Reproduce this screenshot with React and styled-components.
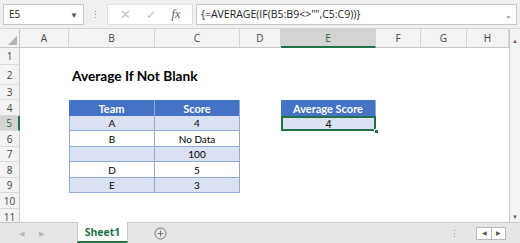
import React from "react";
import styled, { createGlobalStyle } from "styled-components";

const GlobalStyle = createGlobalStyle`
  html, body {
    margin: 0;
    padding: 0;
    background: #ffffff;
    overflow: hidden;
  }
  * {
    box-sizing: border-box;
  }
`;

const green = "#217346";
const headBlue = "#4472c4";
const bandBlue = "#d9e1f2";
const lineBlue = "#8ea9db";

const Window = styled.div`
  width: 520px;
  height: 243px;
  display: flex;
  flex-direction: column;
  background: #fff;
  font-family: Lato, "Open Sans", sans-serif;
  color: #000;
`;

const FormulaBar = styled.div`
  height: 29px;
  display: flex;
  align-items: center;
  padding: 0 3px;
  background: #f0f0f0;
  border-bottom: 1px solid #d6d6d6;
`;

const Box = styled.div`
  height: 21px;
  display: flex;
  align-items: center;
  background: #fff;
  border: 1px solid #c8c8c8;
  font-family: "Open Sans", sans-serif;
  font-size: 10px;
  color: #222;
`;

const NameBox = styled(Box)`
  width: 81px;
  padding: 0 5px;
  justify-content: space-between;
`;

const Caret = styled.span`
  font-size: 8px;
  color: #555;
`;

const Dots = styled.div`
  width: 23px;
  display: flex;
  flex-direction: column;
  align-items: center;
  gap: 2px;
  span {
    width: 1px;
    height: 1px;
    background: #999;
  }
`;

const FxBox = styled(Box)`
  width: 86px;
  justify-content: space-around;
  padding: 0 4px;
  border-color: #e0e0e0;
`;

const FxButton = styled.span`
  color: ${(p) => (p.$muted ? "#c2c2c2" : "#555")};
  font-size: ${(p) => p.$size || 12}px;
  font-family: ${(p) => (p.$serif ? '"Liberation Serif", serif' : "inherit")};
  font-style: ${(p) => (p.$serif ? "italic" : "normal")};
`;

const FormulaInput = styled(Box)`
  flex: 1;
  margin-left: 3px;
  padding: 0 4px;
  justify-content: space-between;
  font-size: 10.5px;
`;

const Main = styled.div`
  display: flex;
  height: 193px;
`;

const Sheet = styled.div`
  width: 509px;
  height: 193px;
  overflow: hidden;
  display: grid;
  grid-template-columns: 20px 49px 86px 85px 41px 95px 45px 46px 42px;
  grid-template-rows: 19px 17px 20px 15px 16px 15px 16px 15px 16px 15px 16px 16px;
`;

const Corner = styled.div`
  background: #f3f3f3;
  border-right: 1px solid #c8c8c8;
  border-bottom: 1px solid #c8c8c8;
  display: flex;
  align-items: flex-end;
  justify-content: flex-end;
  padding: 2px;
`;

const ColHead = styled.div`
  display: flex;
  align-items: center;
  justify-content: center;
  font-family: "Open Sans", sans-serif;
  font-size: 10px;
  color: ${(p) => (p.$active ? "#1e6b41" : "#444")};
  background: ${(p) => (p.$active ? "#d3d3d3" : "#f3f3f3")};
  border-right: 1px solid #d4d4d4;
  border-bottom: ${(p) => (p.$active ? `2px solid ${green}` : "1px solid #c8c8c8")};
`;

const RowHead = styled.div`
  display: flex;
  align-items: center;
  justify-content: center;
  font-family: "Open Sans", sans-serif;
  font-size: 10px;
  color: ${(p) => (p.$active ? "#1e6b41" : "#444")};
  background: ${(p) => (p.$active ? "#d3d3d3" : "#f3f3f3")};
  border-bottom: 1px solid #dadada;
  border-right: ${(p) => (p.$active ? `2px solid ${green}` : "1px solid #c8c8c8")};
`;

const Cell = styled.div`
  position: relative;
  display: flex;
  align-items: center;
  justify-content: center;
  font-size: 10px;
  white-space: nowrap;
  ${(p) =>
    p.$kind === "head" &&
    `
    background: ${headBlue};
    color: #fff;
    font-weight: 700;
    font-size: 11px;
    border-right: 1px solid #8faadc;
  `}
  ${(p) =>
    (p.$kind === "band" || p.$kind === "plain") &&
    `
    background: ${p.$kind === "band" ? bandBlue : "#fff"};
    border-right: 1px solid ${lineBlue};
    border-bottom: 1px solid ${lineBlue};
  `}
  ${(p) => p.$first && `border-left: 1px solid ${lineBlue};`}
  ${(p) => p.$selected && `box-shadow: inset 0 0 0 2px ${green}; border: none; font-size: 10.5px;`}
`;

const Title = styled.div`
  grid-column: 3 / span 3;
  display: flex;
  align-items: center;
  padding-left: 3px;
  font-size: 13.7px;
  font-weight: 700;
  white-space: nowrap;
`;

const Handle = styled.span`
  position: absolute;
  right: -3px;
  bottom: -3px;
  width: 5px;
  height: 5px;
  background: ${green};
  border: 1px solid #fff;
`;

const VScroll = styled.div`
  width: 11px;
  background: #f3f3f3;
  border-left: 1px solid #c8c8c8;
  display: flex;
  flex-direction: column;
  justify-content: space-between;
  align-items: center;
  padding: 8px 0 2px;
  font-size: 6px;
  color: #666;
`;

const TabBar = styled.div`
  height: 21px;
  display: flex;
  align-items: stretch;
  background: #e6e6e6;
  border-top: 1px solid #c8c8c8;
  font-family: "Open Sans", sans-serif;
`;

const NavArrows = styled.div`
  width: 77px;
  display: flex;
  align-items: center;
  gap: 15px;
  padding-left: 19px;
  font-size: 7px;
  color: #b8b8b8;
`;

const Tab = styled.div`
  width: 51px;
  display: flex;
  align-items: center;
  justify-content: center;
  background: #fff;
  color: ${green};
  font-weight: 700;
  font-size: 10.5px;
  border-bottom: 2px solid ${green};
  border-left: 1px solid #c8c8c8;
  border-right: 1px solid #c8c8c8;
  margin-top: -1px;
`;

const AddSheet = styled.div`
  margin-left: 26px;
  display: flex;
  align-items: center;
  color: #777;
`;

const TabRight = styled.div`
  margin-left: auto;
  display: flex;
  align-items: center;
  gap: 10px;
  padding-right: 14px;
`;

const ScrollBtns = styled.div`
  display: flex;
  border: 1px solid #b8b8b8;
  background: #fff;
  span {
    width: 14px;
    height: 11px;
    display: flex;
    align-items: center;
    justify-content: center;
    font-size: 6px;
    color: #555;
  }
  span + span {
    border-left: 1px solid #b8b8b8;
  }
`;

const columns = ["A", "B", "C", "D", "E", "F", "G", "H"];

const table = {
  4: { B: { t: "Team", k: "head" }, C: { t: "Score", k: "head" }, E: { t: "Average Score", k: "head" } },
  5: { B: { t: "A", k: "band" }, C: { t: "4", k: "band" }, E: { t: "4", k: "band", sel: true } },
  6: { B: { t: "B", k: "plain" }, C: { t: "No Data", k: "plain" } },
  7: { B: { t: "", k: "band" }, C: { t: "100", k: "band" } },
  8: { B: { t: "D", k: "plain" }, C: { t: "5", k: "plain" } },
  9: { B: { t: "E", k: "band" }, C: { t: "3", k: "band" } },
};

const CornerMark = () => (
  <svg width="9" height="9" viewBox="0 0 9 9">
    <polygon points="9,0 9,9 0,9" fill="#b4b4b4" />
  </svg>
);

const PlusCircle = () => (
  <svg width="13" height="13" viewBox="0 0 13 13">
    <circle cx="6.5" cy="6.5" r="5.5" fill="none" stroke="#777" strokeWidth="1" />
    <path d="M6.5 3.5v6M3.5 6.5h6" stroke="#777" strokeWidth="1" />
  </svg>
);

const SheetRow = ({ n }) => {
  const row = table[n] || {};
  return (
    <>
      <RowHead $active={n === 5}>{n}</RowHead>
      {n === 2 ? (
        <>
          <Cell />
          <Title>Average If Not Blank</Title>
          {columns.slice(4).map((c) => (
            <Cell key={c} />
          ))}
        </>
      ) : (
        columns.map((c) => {
          const cell = row[c];
          if (!cell) return <Cell key={c} />;
          return (
            <Cell key={c} $kind={cell.k} $first={c !== "C" && cell.k !== "head"} $selected={cell.sel}>
              {cell.t}
              {cell.sel && <Handle />}
            </Cell>
          );
        })
      )}
    </>
  );
};

const App = () => {
  const rows = [1, 2, 3, 4, 5, 6, 7, 8, 9, 10, 11];
  return (
    <Window>
      <GlobalStyle />
      <FormulaBar>
        <NameBox>
          E5
          <Caret>▼</Caret>
        </NameBox>
        <Dots>
          <span />
          <span />
          <span />
        </Dots>
        <FxBox>
          <FxButton $muted $size={13}>✕</FxButton>
          <FxButton $muted $size={12}>✓</FxButton>
          <FxButton $serif $size={12}>fx</FxButton>
        </FxBox>
        <FormulaInput>
          {'{=AVERAGE(IF(B5:B9<>"",C5:C9))}'}
          <Caret>⌄</Caret>
        </FormulaInput>
      </FormulaBar>
      <Main>
        <Sheet>
          <Corner>
            <CornerMark />
          </Corner>
          {columns.map((c) => (
            <ColHead key={c} $active={c === "E"}>
              {c}
            </ColHead>
          ))}
          {rows.map((n) => (
            <SheetRow key={n} n={n} />
          ))}
        </Sheet>
        <VScroll>
          <span>▲</span>
          <span>▼</span>
        </VScroll>
      </Main>
      <TabBar>
        <NavArrows>
          <span>◀</span>
          <span>▶</span>
        </NavArrows>
        <Tab>Sheet1</Tab>
        <AddSheet>
          <PlusCircle />
        </AddSheet>
        <TabRight>
          <Dots>
            <span />
            <span />
            <span />
          </Dots>
          <ScrollBtns>
            <span>◀</span>
            <span>▶</span>
          </ScrollBtns>
        </TabRight>
      </TabBar>
    </Window>
  );
};

export default App;
